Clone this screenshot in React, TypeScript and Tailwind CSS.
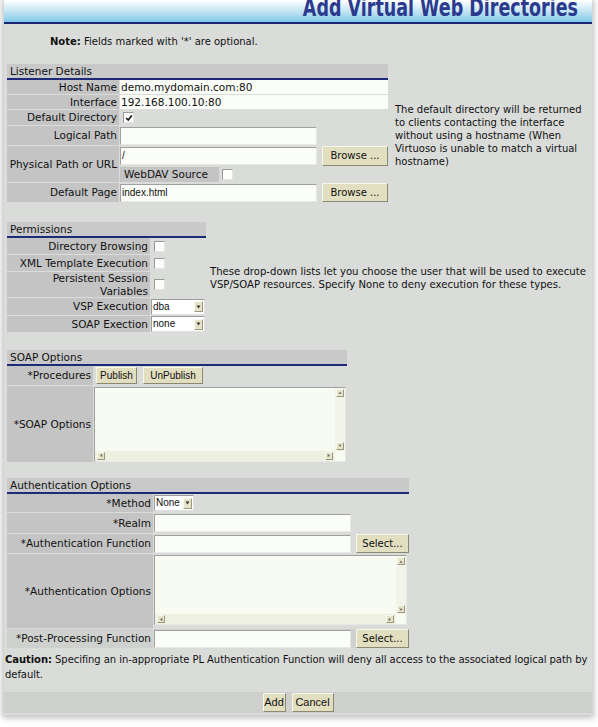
import React from "react";

type C = { children?: React.ReactNode; cls?: string };

const Btn = ({ children, cls = "" }: C) => (
  <div
    className={`flex items-center justify-center bg-[#e2dec0] border border-t-[#f8f6e8] border-l-[#f8f6e8] border-b-[#8a8870] border-r-[#8a8870] text-[10px] leading-none ${cls}`}
  >
    {children}
  </div>
);

const Check = ({ checked = false }: { checked?: boolean }) => (
  <span className="inline-flex items-center justify-center w-[11px] h-[11px] bg-[#fdfdfb] border border-t-[#9a9a9a] border-l-[#9a9a9a] border-b-[#e4e4e4] border-r-[#e4e4e4]">
    {checked && (
      <svg width="8" height="8" viewBox="0 0 8 8">
        <path d="M1.2 4 L3.2 6 L6.8 1.6" stroke="#111" strokeWidth="1.6" fill="none" />
      </svg>
    )}
  </span>
);

const Arrow = ({ dir }: { dir: "up" | "down" | "left" | "right" }) => {
  const p =
    dir === "up"
      ? "M1.5 5 L3.5 2.5 L5.5 5 Z"
      : dir === "down"
      ? "M1.5 2.5 L3.5 5 L5.5 2.5 Z"
      : dir === "left"
      ? "M5 1.5 L2.5 3.5 L5 5.5 Z"
      : "M2 1.5 L4.5 3.5 L2 5.5 Z";
  return (
    <span className="flex items-center justify-center w-[8px] h-[8px] bg-[#e6e3c9] border border-t-[#fbfaf0] border-l-[#fbfaf0] border-b-[#9a9880] border-r-[#9a9880]">
      <svg width="7" height="7" viewBox="0 0 7 7">
        <path d={p} fill="#6a6a60" />
      </svg>
    </span>
  );
};

const Sel = ({ value, cls = "" }: { value: string; cls?: string }) => (
  <div className={`flex items-center h-[16px] bg-white border border-t-[#9c9c9c] border-l-[#9c9c9c] border-b-[#e0e0e0] border-r-[#e0e0e0] ${cls}`}>
    <span className="flex-1 pl-[1px] text-[10px] leading-none font-['Liberation_Sans',sans-serif]">{value}</span>
    <span className="flex items-center justify-center w-[9px] h-[11px] mr-[1px] bg-[#e6e3c9] border border-t-[#fbfaf0] border-l-[#fbfaf0] border-b-[#9a9880] border-r-[#9a9880]">
      <svg width="5" height="4" viewBox="0 0 5 4">
        <path d="M0.5 0.5 L4.5 0.5 L2.5 3.5 Z" fill="#333" />
      </svg>
    </span>
  </div>
);

const Input = ({ children, cls = "" }: C) => (
  <div className={`flex items-center h-[18px] bg-[#fbfdf8] border border-t-[#a0a0a0] border-l-[#a0a0a0] border-b-[#e8e8e8] border-r-[#e8e8e8] pl-[1px] text-[10px] leading-none font-['Liberation_Sans',sans-serif] ${cls}`}>
    {children}
  </div>
);

const TextArea = ({ cls = "" }: { cls?: string }) => (
  <div className={`flex flex-col bg-[#f8fbf2] border border-t-[#a0a0a0] border-l-[#a0a0a0] border-b-[#e8e8e8] border-r-[#e8e8e8] ${cls}`}>
    <div className="flex flex-1">
      <div className="flex-1" />
      <div className="w-[10px] flex flex-col items-center justify-between py-[1px] bg-[#f2f4ea]">
        <Arrow dir="up" />
        <Arrow dir="down" />
      </div>
    </div>
    <div className="flex h-[10px]">
      <div className="flex-1 flex items-center justify-between px-[2px] bg-[#eef0e2]">
        <Arrow dir="left" />
        <Arrow dir="right" />
      </div>
      <div className="w-[10px]" />
    </div>
  </div>
);

const Header = ({ children }: C) => (
  <div className="h-[16px] bg-[#c9c9c9] border-b-2 border-[#1d2a78] pl-[3px] text-[10.5px] leading-[14px] text-[#111]">
    {children}
  </div>
);

const Label = ({ children, cls = "" }: C) => (
  <div className={`flex items-center justify-end bg-[#c4c4c4] pr-[2px] text-[10.5px] leading-[13px] text-right text-[#111] ${cls}`}>
    {children}
  </div>
);

export default function App() {
  return (
    <div className="w-[598px] h-[727px] overflow-hidden bg-white font-['DejaVu_Sans',sans-serif] text-[#111]">
      <div className="ml-[4px] w-[588px] bg-[#d9dcd9] shadow-[0_1px_6px_2px_rgba(0,0,0,0.25)]">
        {/* Title bar */}
        <div className="h-[24px] overflow-hidden bg-gradient-to-b from-[#ffffff] via-[#c4e6f4] to-[#80c7e6] border-b-2 border-[#1b2670] flex items-end justify-end pr-[14px] pb-[1px]">
          <span className="inline-block origin-bottom scale-y-[1.45] text-[17.5px] leading-[17.5px] font-bold text-[#2c3a8e] whitespace-nowrap">
            Add Virtual Web Directories
          </span>
        </div>

        {/* Note */}
        <div className="pl-[46px] pt-[12px] text-[10px] leading-[12px]">
          <b>Note:</b> Fields marked with '*' are optional.
        </div>

        {/* Listener details */}
        <div className="flex items-center mt-[16px] pl-[3px]">
          <div className="w-[381px]">
            <Header>Listener Details</Header>
            <div className="grid grid-cols-[112px_1fr] gap-[1px]">
              <Label cls="h-[14px]">Host Name</Label>
              <div className="h-[14px] bg-[#fbfdf8] flex items-center pl-[1px] text-[10.5px] leading-none">demo.mydomain.com:80</div>
              <Label cls="h-[14px]">Interface</Label>
              <div className="h-[14px] bg-[#fbfdf8] flex items-center pl-[1px] text-[10.5px] leading-none">192.168.100.10:80</div>
              <Label cls="h-[15px]">Default Directory</Label>
              <div className="h-[15px] flex items-center pl-[3px]">
                <Check checked />
              </div>
              <Label cls="h-[19px]">Logical Path</Label>
              <div className="h-[19px] flex items-center">
                <Input cls="w-[197px]" />
              </div>
              <Label cls="row-span-2">Physical Path or URL</Label>
              <div className="h-[20px] flex items-center justify-between">
                <Input cls="w-[197px]">/</Input>
                <Btn cls="w-[66px] h-[20px]">Browse ...</Btn>
              </div>
              <div className="h-[15px] flex items-center">
                <div className="w-[99px] h-[15px] bg-[#c4c4c4] flex items-center pl-[4px] text-[10.5px] leading-none">WebDAV Source</div>
                <span className="ml-[3px] flex">
                  <Check />
                </span>
              </div>
              <Label cls="h-[19px]">Default Page</Label>
              <div className="h-[19px] flex items-center justify-between">
                <Input cls="w-[197px]">index.html</Input>
                <Btn cls="w-[66px] h-[19px]">Browse ...</Btn>
              </div>
            </div>
          </div>
          <div className="ml-[7px] w-[192px] text-[10px] leading-[13px] pt-[4px]">
            The default directory will be returned to clients contacting the interface without using a hostname (When Virtuoso is unable to match a virtual hostname)
          </div>
        </div>

        {/* Permissions */}
        <div className="flex items-center mt-[20px] pl-[3px]">
          <div className="w-[199px]">
            <Header>Permissions</Header>
            <div className="grid grid-cols-[143px_1fr] gap-[1px]">
              <Label cls="h-[16px]">Directory Browsing</Label>
              <div className="h-[16px] flex items-center pl-[3px]">
                <Check />
              </div>
              <Label cls="h-[16px]">XML Template Execution</Label>
              <div className="h-[16px] flex items-center pl-[3px]">
                <Check />
              </div>
              <Label cls="h-[25px] leading-[12px]">
                <span>
                  Persistent Session
                  <br />
                  Variables
                </span>
              </Label>
              <div className="h-[25px] flex items-center pl-[3px]">
                <Check />
              </div>
              <Label cls="h-[17px]">VSP Execution</Label>
              <div className="h-[17px] flex items-center">
                <Sel value="dba" cls="w-[54px]" />
              </div>
              <Label cls="h-[16px]">SOAP Exection</Label>
              <div className="h-[16px] flex items-center">
                <Sel value="none" cls="w-[54px]" />
              </div>
            </div>
          </div>
          <div className="ml-[4px] flex-1 text-[10.1px] leading-[13px] pt-[2px]">
            These drop-down lists let you choose the user that will be used to execute VSP/SOAP resources. Specify None to deny execution for these types.
          </div>
        </div>

        {/* SOAP Options */}
        <div className="mt-[18px] pl-[3px]">
          <div className="w-[340px]">
            <Header>SOAP Options</Header>
            <div className="grid grid-cols-[86px_1fr] gap-[1px]">
              <Label cls="h-[19px]">*Procedures</Label>
              <div className="h-[19px] flex items-center gap-[6px] pl-[2px] font-['Liberation_Sans',sans-serif]">
                <Btn cls="w-[41px] h-[17px]">Publish</Btn>
                <Btn cls="w-[60px] h-[17px]">UnPublish</Btn>
              </div>
              <Label cls="h-[76px]">*SOAP Options</Label>
              <div className="h-[76px] flex items-center">
                <TextArea cls="w-[252px] h-[75px]" />
              </div>
            </div>
          </div>
        </div>

        {/* Authentication Options */}
        <div className="mt-[16px] pl-[3px]">
          <div className="w-[402px]">
            <Header>Authentication Options</Header>
            <div className="grid grid-cols-[146px_1fr] gap-[1px]">
              <Label cls="h-[18px]">*Method</Label>
              <div className="h-[18px] flex items-center">
                <Sel value="None" cls="w-[40px]" />
              </div>
              <Label cls="h-[20px]">*Realm</Label>
              <div className="h-[20px] flex items-center">
                <Input cls="w-[197px]" />
              </div>
              <Label cls="h-[19px]">*Authentication Function</Label>
              <div className="h-[19px] flex items-center justify-between">
                <Input cls="w-[197px]" />
                <Btn cls="w-[53px] h-[19px]">Select...</Btn>
              </div>
              <Label cls="h-[74px]">*Authentication Options</Label>
              <div className="h-[74px] flex items-start pt-[1px]">
                <TextArea cls="w-[253px] h-[70px]" />
              </div>
              <Label cls="h-[19px] bg-[#cfd1cf]">*Post-Processing Function</Label>
              <div className="h-[19px] flex items-center justify-between bg-[#cfd1cf]">
                <Input cls="w-[197px]" />
                <Btn cls="w-[53px] h-[19px]">Select...</Btn>
              </div>
            </div>
          </div>
        </div>

        {/* Caution */}
        <div className="pl-[1px] mr-[-8px] pt-[4px] text-[10px] leading-[15px] tracking-[-0.06px]">
          <b>Caution:</b> Specifing an in-appropriate PL Authentication Function will deny all access to the associated logical path by default.
        </div>

        {/* Bottom bar */}
        <div className="mt-[10px] h-[21px] bg-[#cdd0cd] flex items-center justify-center gap-[6px] font-['Liberation_Sans',sans-serif]">
          <Btn cls="w-[23px] h-[19px] text-[11px]">Add</Btn>
          <Btn cls="w-[42px] h-[19px] text-[11px]">Cancel</Btn>
        </div>
        <div className="h-[2px]" />
      </div>
    </div>
  );
}
